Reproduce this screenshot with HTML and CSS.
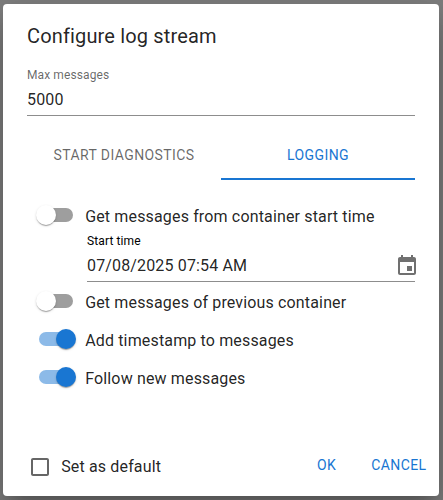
FILE: index.html
```html
<!DOCTYPE html>
<html lang="en">
<head>
<meta charset="utf-8">
<title>Configure log stream</title>
<link rel="stylesheet" href="styles.css">
</head>
<body>
<main class="dialog">
  <h1 class="title">Configure log stream</h1>
  <div class="field">
    <div class="field-label">Max messages</div>
    <div class="field-value">5000</div>
  </div>
  <div class="tabs">
    <div class="tab">START DIAGNOSTICS</div>
    <div class="tab active">LOGGING</div>
  </div>
  <div class="options">
    <div class="option"><span class="switch"><span class="thumb"></span></span><span class="option-label">Get messages from container start time</span></div>
    <div class="field date-field">
      <div class="field-label">Start time</div>
      <div class="field-value">07/08/2025 07:54 AM
        <svg class="icon calendar" viewBox="0 0 24 24"><path d="M17 12h-5v5h5v-5zM16 1v2H8V1H6v2H5c-1.11 0-1.99.9-1.99 2L3 19c0 1.1.89 2 2 2h14c1.1 0 2-.9 2-2V5c0-1.1-.9-2-2-2h-1V1h-2zm3 18H5V8h14v11z"/></svg>
      </div>
    </div>
    <div class="option"><span class="switch"><span class="thumb"></span></span><span class="option-label">Get messages of previous container</span></div>
    <div class="option"><span class="switch on"><span class="thumb"></span></span><span class="option-label">Add timestamp to messages</span></div>
    <div class="option"><span class="switch on"><span class="thumb"></span></span><span class="option-label">Follow new messages</span></div>
  </div>
  <footer class="actions">
    <svg class="icon" viewBox="0 0 24 24"><path d="M19 5v14H5V5h14m0-2H5c-1.1 0-2 .9-2 2v14c0 1.1.9 2 2 2h14c1.1 0 2-.9 2-2V5c0-1.1-.9-2-2-2z"/></svg>
    <span class="default-label">Set as default</span>
    <span class="button">OK</span>
    <span class="button">CANCEL</span>
  </footer>
</main>
</body>
</html>
```
FILE: styles.css
```css
* { box-sizing: border-box; }
body {
  margin: 0;
  height: 500px;
  padding: 4px 4px 4px 3px;
  overflow: hidden;
  background: #7f7f7f;
  font-family: Roboto, "Liberation Sans", sans-serif;
  font-size: 16px;
  color: rgba(0, 0, 0, .87);
}
.dialog {
  display: flex;
  flex-direction: column;
  height: 492px;
  border-radius: 4px;
  background: #fff;
  box-shadow: 0 11px 15px -7px rgba(0,0,0,.2), 0 24px 38px 3px rgba(0,0,0,.14), 0 9px 46px 8px rgba(0,0,0,.12);
}
.title {
  margin: 0;
  padding: 16px 24px 0;
  height: 64px;
  font-size: 20px;
  font-weight: 400;
  line-height: 32px;
  letter-spacing: .15px;
}
.field {
  height: 48px;
  margin: 0 24px;
  border-bottom: 1px solid #8d8d8d;
}
.field-label {
  height: 14px;
  font-size: 12px;
  line-height: 14px;
  letter-spacing: .11px;
  color: rgba(0, 0, 0, .6);
}
.field-value {
  display: flex;
  justify-content: space-between;
  align-items: center;
  height: 33px;
  padding-top: 2px;
  letter-spacing: .15px;
}
.icon { flex: none; width: 24px; height: 24px; fill: rgba(0, 0, 0, .6); }
.calendar { margin-right: -4px; fill: rgba(0, 0, 0, .56); }
.tabs {
  display: flex;
  height: 48px;
  margin: 16px 24px 0;
}
.tab {
  flex: 1;
  text-align: center;
  font-size: 14px;
  line-height: 46px;
  letter-spacing: .4px;
  color: rgba(0, 0, 0, .6);
}
.tab.active { color: #1976d2; border-bottom: 2px solid #1976d2; }
.options { padding-top: 16px; }
.option { display: flex; align-items: center; height: 38px; padding-left: 36px; }
.switch {
  display: flex;
  align-items: center;
  width: 34px;
  height: 14px;
  border-radius: 7px;
  background: #9e9e9e;
}
.thumb {
  flex: none;
  width: 20px;
  height: 20px;
  margin-left: -3px;
  border-radius: 50%;
  background: #fff;
  box-shadow: 0 2px 1px -1px rgba(0,0,0,.2), 0 1px 1px rgba(0,0,0,.14), 0 1px 3px rgba(0,0,0,.12);
}
.switch.on { background: #8cbae8; }
.on .thumb { margin-left: 17px; background: #1976d2; }
.option-label { margin-left: 12.2px; padding-top: 2px; letter-spacing: .15px; }
.date-field { margin: 0 24px 0 84px; }
.date-field .field-label { color: #000; }
.actions {
  display: flex;
  align-items: center;
  margin-top: auto;
  height: 58px;
  padding: 0 12.5px 0 25px;
}
.default-label { margin: 0 auto 0 9.2px; padding-bottom: 2px; letter-spacing: .15px; }
.button { margin-left: 35px; padding-bottom: 5px; font-size: 14px; letter-spacing: .4px; color: #1976d2; }
```
